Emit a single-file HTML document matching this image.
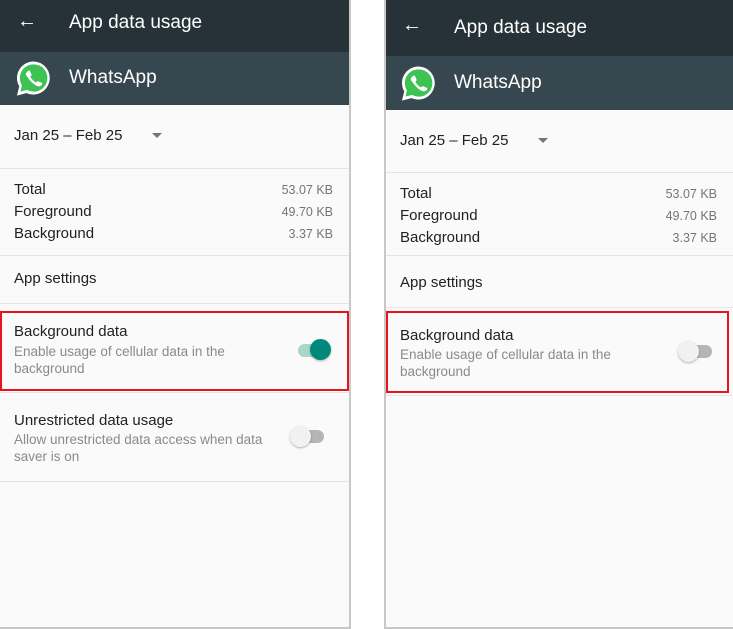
<!DOCTYPE html><html><head><style>
*{margin:0;padding:0;box-sizing:border-box}
body{width:733px;height:629px;background:#fff;font-family:"Liberation Sans",sans-serif;position:relative;overflow:hidden}
.p{position:absolute;background:#fafafa;border-right:2px solid #c8c8c8;border-bottom:2px solid #c8c8c8}
.a{position:absolute;white-space:nowrap}
.hd{position:absolute;left:0;right:0;top:0;background:#263238}
.ap{position:absolute;left:0;right:0;background:#37474f}
.ln{position:absolute;left:0;right:0;height:1px;background:#e4e4e4}
.t{color:#212121;font-size:15px}
.s{color:#8a8a8a;font-size:13.5px;line-height:16.5px}
.v{color:#757575;font-size:12.5px;right:16px}
.red{position:absolute;border:2px solid #e8131b}
</style></head><body>
<div class="p" style="left:0;top:0;width:351px;height:629px">
<div class="hd" style="height:52px"></div>
<div class="ap" style="top:52px;height:53px"></div>
<div class="a" style="left:17px;top:10px;color:#fff;font-size:20px">←</div>
<div class="a" style="left:69px;top:12px;color:#fff;font-size:19px">App data usage</div>
<svg class="a" style="left:14px;top:59px" width="39" height="40" viewBox="0 0 40 40"><path d="M20 2a17 17 0 0 0-14.6 25.6L3 37l9.7-2.5A17 17 0 1 0 20 2z" fill="#fff"/><path d="M20 5a14 14 0 0 0-11.9 21.4L6.6 33l6.8-1.8A14 14 0 1 0 20 5z" fill="#3ec254"/><path d="M14 12c1-1 2-1 2.5 0l1.5 3.5c.3.8-.7 1.6-1.2 2.2 1.3 2.6 3.2 4.5 5.8 5.8.6-.5 1.4-1.5 2.2-1.2l3.5 1.5c1 .5 1 1.5 0 2.5-2 2-5 1.5-8.5-1.5S12 16 12 15s1-2 2-3z" fill="#fff"/></svg>
<div class="a" style="left:69px;top:67px;color:#fff;font-size:19px">WhatsApp</div>
<div class="a t" style="left:14px;top:127px">Jan 25 – Feb 25</div>
<div class="a" style="left:152px;top:133px;width:0;height:0;border-left:5px solid transparent;border-right:5px solid transparent;border-top:5px solid #757575"></div>
<div class="ln" style="top:168px"></div>
<div class="a t" style="left:14px;top:181px">Total</div><div class="a v" style="top:183px">53.07 KB</div>
<div class="a t" style="left:14px;top:203px">Foreground</div><div class="a v" style="top:205px">49.70 KB</div>
<div class="a t" style="left:14px;top:225px">Background</div><div class="a v" style="top:227px">3.37 KB</div>
<div class="ln" style="top:255px"></div>
<div class="a t" style="left:14px;top:270px">App settings</div>
<div class="ln" style="top:303px"></div>
<div class="a t" style="left:14px;top:323px">Background data</div>
<div class="a s" style="left:14px;top:344px">Enable usage of cellular data in the<br>background</div>
<div class="a" style="left:298px;top:344px;width:32px;height:13px;border-radius:7px;background:#a9d6cd"></div>
<div class="a" style="left:310px;top:339px;width:21px;height:21px;border-radius:50%;background:#00897b;box-shadow:0 1px 2px rgba(0,0,0,.3)"></div>
<div class="ln" style="top:392px"></div>
<div class="a t" style="left:14px;top:412px">Unrestricted data usage</div>
<div class="a s" style="left:14px;top:432px">Allow unrestricted data access when data<br>saver is on</div>
<div class="a" style="left:292px;top:430px;width:32px;height:13px;border-radius:7px;background:#b5b5b5"></div>
<div class="a" style="left:290px;top:426px;width:21px;height:21px;border-radius:50%;background:#f1f1f1;box-shadow:0 1px 2px rgba(0,0,0,.3)"></div>
<div class="ln" style="top:481px"></div>
</div>
<div class="red" style="left:0;top:311px;width:349px;height:80px"></div>
<div class="p" style="left:384px;top:0;width:349px;height:629px;border-left:2px solid #c8c8c8;border-right:none">
<div class="hd" style="height:56px"></div>
<div class="ap" style="top:56px;height:54px"></div>
<div class="a" style="left:16px;top:14px;color:#fff;font-size:20px">←</div>
<div class="a" style="left:68px;top:17px;color:#fff;font-size:19px">App data usage</div>
<svg class="a" style="left:13px;top:64px" width="39" height="40" viewBox="0 0 40 40"><path d="M20 2a17 17 0 0 0-14.6 25.6L3 37l9.7-2.5A17 17 0 1 0 20 2z" fill="#fff"/><path d="M20 5a14 14 0 0 0-11.9 21.4L6.6 33l6.8-1.8A14 14 0 1 0 20 5z" fill="#3ec254"/><path d="M14 12c1-1 2-1 2.5 0l1.5 3.5c.3.8-.7 1.6-1.2 2.2 1.3 2.6 3.2 4.5 5.8 5.8.6-.5 1.4-1.5 2.2-1.2l3.5 1.5c1 .5 1 1.5 0 2.5-2 2-5 1.5-8.5-1.5S12 16 12 15s1-2 2-3z" fill="#fff"/></svg>
<div class="a" style="left:68px;top:72px;color:#fff;font-size:19px">WhatsApp</div>
<div class="a t" style="left:14px;top:132px">Jan 25 – Feb 25</div>
<div class="a" style="left:152px;top:138px;width:0;height:0;border-left:5px solid transparent;border-right:5px solid transparent;border-top:5px solid #757575"></div>
<div class="ln" style="top:172px"></div>
<div class="a t" style="left:14px;top:185px">Total</div><div class="a v" style="top:187px">53.07 KB</div>
<div class="a t" style="left:14px;top:207px">Foreground</div><div class="a v" style="top:209px">49.70 KB</div>
<div class="a t" style="left:14px;top:229px">Background</div><div class="a v" style="top:231px">3.37 KB</div>
<div class="ln" style="top:255px"></div>
<div class="a t" style="left:14px;top:274px">App settings</div>
<div class="ln" style="top:307px"></div>
<div class="a t" style="left:14px;top:327px">Background data</div>
<div class="a s" style="left:14px;top:347px">Enable usage of cellular data in the<br>background</div>
<div class="a" style="left:294px;top:345px;width:32px;height:13px;border-radius:7px;background:#b5b5b5"></div>
<div class="a" style="left:292px;top:341px;width:21px;height:21px;border-radius:50%;background:#f1f1f1;box-shadow:0 1px 2px rgba(0,0,0,.3)"></div>
<div class="ln" style="top:395px"></div>
</div>
<div class="red" style="left:386px;top:311px;width:343px;height:82px"></div>
</body></html>
